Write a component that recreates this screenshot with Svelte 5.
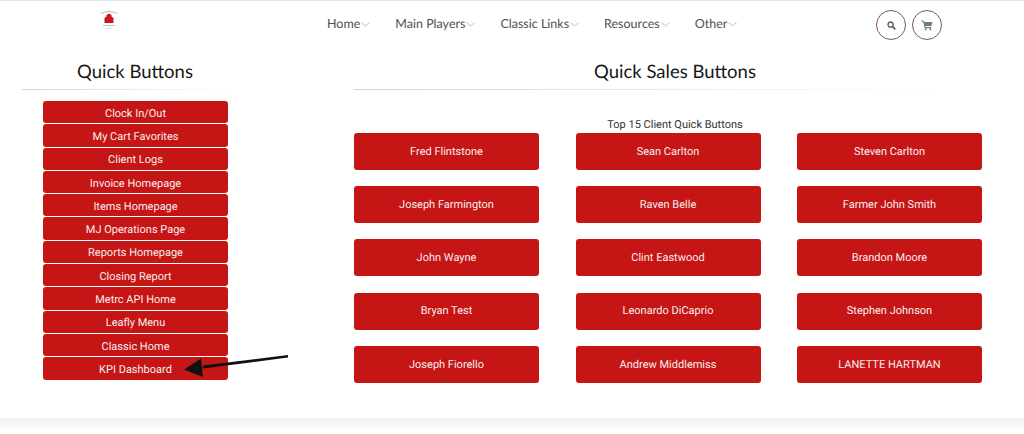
<script>
  const nav = ['Home', 'Main Players', 'Classic Links', 'Resources', 'Other'];
  const quick = ['Clock In/Out','My Cart Favorites','Client Logs','Invoice Homepage','Items Homepage','MJ Operations Page','Reports Homepage','Closing Report','Metrc API Home','Leafly Menu','Classic Home','KPI Dashboard'];
  const clients = ['Fred Flintstone','Sean Carlton','Steven Carlton','Joseph Farmington','Raven Belle','Farmer John Smith','John Wayne','Clint Eastwood','Brandon Moore','Bryan Test','Leonardo DiCaprio','Stephen Johnson','Joseph Fiorello','Andrew Middlemiss','LANETTE HARTMAN'];
</script>

<div class="page">
  <header class="top">
    <div class="logo">
      <svg width="20" height="20" viewBox="0 0 20 20" aria-hidden="true">
        <path d="M2 3.500Q10 -.5 18 3.500" fill="none" stroke="#aaa" stroke-width=".8"/>
        <path d="M5.500 13V8L7.500 6.500V5L10 3.500 12.500 5V6.500L14.500 8V13z" fill="#c8191b"/>
        <path d="M4 15.500h12" stroke="#bbb" stroke-width=".9"/>
        <path d="M7.500 18.500h5" stroke="#ccc" stroke-width=".8"/>
      </svg>
    </div>
    <nav class="nav">
      {#each nav as item}
        <span class="nav-item">{item}<svg class="chev" width="9" height="5" viewBox="0 0 9 5"><path d="M.5.5l4 3.500 4-3.500" fill="none" stroke="#bdbdbd"/></svg></span>
      {/each}
    </nav>
    <div class="actions">
      <span class="circle">
        <svg width="9" height="9" viewBox="0 0 9 9"><circle cx="3.600" cy="3.600" r="2.600" fill="none" stroke="#555" stroke-width="1.300"/><path d="M5.500 5.500L8.300 8.300" stroke="#555" stroke-width="1.700"/></svg>
      </span>
      <span class="circle">
        <svg width="12" height="11" viewBox="0 0 12 11"><path d="M.5 1H2.500L4 7.500H10" fill="none" stroke="#666" stroke-width="1"/><path d="M3 2h8.500L10.300 6H4z" fill="#777"/><circle cx="4.700" cy="9.300" r="1" fill="#666"/><circle cx="9.300" cy="9.300" r="1" fill="#666"/></svg>
      </span>
    </div>
  </header>

  <main class="content">
    <section class="left">
      <h2>Quick Buttons</h2>
      <div class="rule"></div>
      <div class="quick-list">
        {#each quick as q}<button class="btn small">{q}</button>{/each}
      </div>
    </section>
    <section class="right">
      <h2>Quick Sales Buttons</h2>
      <div class="rule"></div>
      <p class="sub">Top 15 Client Quick Buttons</p>
      <div class="grid">
        {#each clients as c}<button class="btn large">{c}</button>{/each}
      </div>
    </section>
  </main>

  <div class="footer-band"></div>

  <svg class="arrow" width="120" height="40" viewBox="0 0 120 40" aria-hidden="true">
    <path d="M105 5L20 15.500L20 18.500L105 7.500z" fill="#111"/>
    <path d="M1 19.500L18 8.500L20 27z" fill="#111"/>
  </svg>
</div>

<style>
  :global(body) { margin: 0; background: #fff; }
  .page { position: relative; width: 1024px; height: 434px; overflow: hidden; background: #fff; font-family: "Roboto", "Liberation Sans", sans-serif; border-top: 1px solid #e4e4e4; box-sizing: border-box; text-rendering: geometricPrecision; }
  .top { display: flex; height: 50px; box-sizing: border-box; padding-top: 9px; align-items: flex-start; }
  .logo { width: 20px; height: 20px; margin-left: 99px; }
  .nav { display: flex; margin-left: 208px; gap: 25px; padding-top: 6px; width: 480px; }
  .nav-item { display: flex; align-items: center; font-family: "Lato", "Open Sans", sans-serif; font-size: 12.500px; line-height: 16px; color: #4f4f4f; white-space: nowrap; }
  .chev { margin-left: 1px; margin-top: 1px; }
  .actions { display: flex; gap: 6px; margin-left: 69px; }
  .circle { width: 30px; height: 30px; border: 1px solid #7d5a50; border-radius: 50%; display: flex; align-items: center; justify-content: center; box-sizing: border-box; }
  .content { display: flex; align-items: flex-start; }
  h2 { margin: 0; font-family: "Lato", "Open Sans", sans-serif; font-weight: 400; font-size: 18.500px; line-height: 24px; color: #161616; text-align: center; padding-top: 8px; }
  .rule { height: 1px; margin-top: 6px; background: linear-gradient(to right, #d5d5d5, #f3f3f3 70%, #fff); }
  .left { width: 213px; margin-left: 22px; }
  .left h2 { padding-left: 13px; }
  .quick-list { display: flex; flex-direction: column; gap: 1px; margin: 11px 7px 0 21px; }
  .btn { border: none; background: #c51515; color: #f8eeee; font-family: "Roboto", "Liberation Sans", sans-serif; font-weight: 400; padding: 0; text-align: center; text-rendering: geometricPrecision; }
  .small { height: 22.300px; border-radius: 3px; font-size: 11px; padding-top: 2px; }
  .right { width: 628px; margin-left: 119px; }
  .right h2 { width: 642px; }
  .right .rule { width: 601px; }
  .sub { margin: 28px 0 0; text-align: center; font-size: 11px; line-height: 13px; color: #333; width: 642px; }
  .grid { display: grid; grid-template-columns: repeat(3, 185px); column-gap: 36.500px; row-gap: 16.200px; margin-top: 2px; }
  .large { height: 37px; border-radius: 3px; font-size: 11px; padding-bottom: 0.500px; }
  .footer-band { position: absolute; left: 0; right: 0; top: 417px; height: 12px; background: linear-gradient(to bottom, #efefef, #fafafa 70%, #fff); }
  .arrow { position: absolute; left: 183px; top: 349px; }
</style>
